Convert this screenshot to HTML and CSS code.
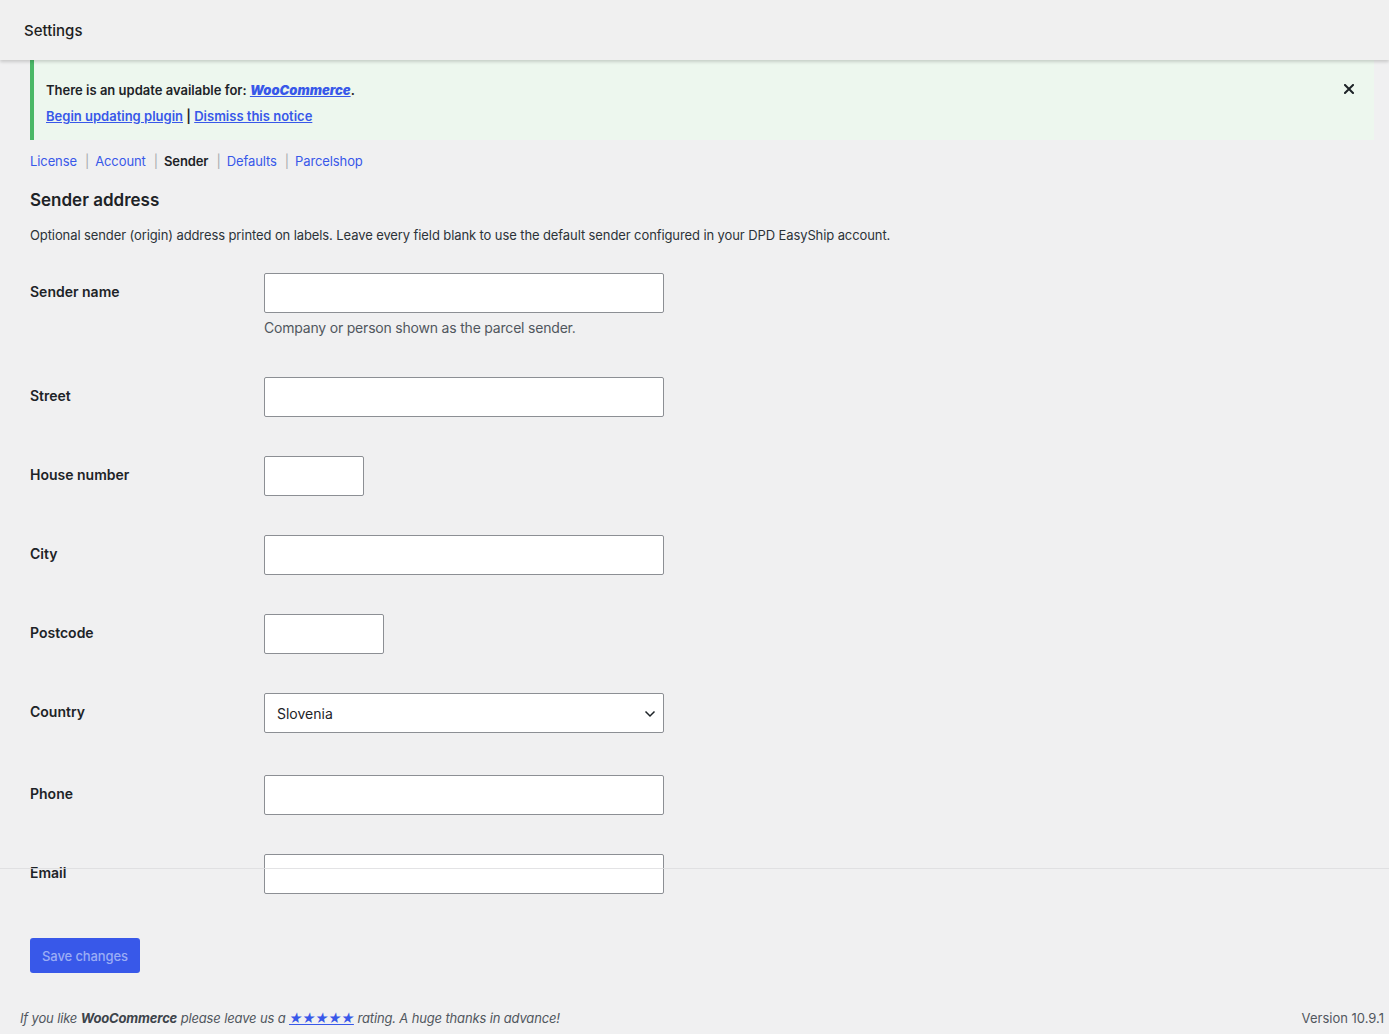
FILE: index.html
```html
<!DOCTYPE html>
<html lang="en">
  <head>
    <meta charset="UTF-8" />
    <meta name="viewport" content="width=device-width, initial-scale=1.0" />
    <title>Settings</title>
    <link rel="stylesheet" href="styles.css">
  </head>
  <body>
    <header class="topbar">
      <h1>Settings</h1>
    </header>

    <div class="wrap">
      <div class="notice">
        <p class="notice-title">
          There is an update available for:
          <a href="#"><strong><em>WooCommerce</em></strong></a>.
        </p>
        <p class="notice-links">
          <a href="#">Begin updating plugin</a> | <a href="#">Dismiss this notice</a>
        </p>
        <button class="notice-dismiss" type="button" aria-label="Dismiss">
          <svg width="10" height="10" viewBox="0 0 10 10">
            <path d="M1 1 L9 9 M9 1 L1 9" stroke="#1d2327" stroke-width="2" stroke-linecap="square" />
          </svg>
        </button>
      </div>

      <ul class="subnav">
        <li><a href="#">License</a><span class="sep">|</span></li>
        <li><a href="#">Account</a><span class="sep">|</span></li>
        <li><span class="current">Sender</span><span class="sep">|</span></li>
        <li><a href="#">Defaults</a><span class="sep">|</span></li>
        <li><a href="#">Parcelshop</a></li>
      </ul>

      <h2 class="section-title">Sender address</h2>
      <p class="section-desc">
        Optional sender (origin) address printed on labels. Leave every field blank to use the default sender configured in your DPD EasyShip account.
      </p>

      <form class="settings-form">
        <div class="form-row">
          <label for="sender_name">Sender name</label>
          <div class="field">
            <input id="sender_name" type="text" class="input-wide" />
            <p class="field-desc">Company or person shown as the parcel sender.</p>
          </div>
        </div>

        <div class="form-row">
          <label for="street">Street</label>
          <div class="field">
            <input id="street" type="text" class="input-wide" />
          </div>
        </div>

        <div class="form-row">
          <label for="house">House number</label>
          <div class="field">
            <input id="house" type="text" class="input-tiny" />
          </div>
        </div>

        <div class="form-row">
          <label for="city">City</label>
          <div class="field">
            <input id="city" type="text" class="input-wide" />
          </div>
        </div>

        <div class="form-row">
          <label for="postcode">Postcode</label>
          <div class="field">
            <input id="postcode" type="text" class="input-short" />
          </div>
        </div>

        <div class="form-row form-row-select">
          <label for="country">Country</label>
          <div class="field">
            <div class="select-wrap">
              <select id="country">
                <option>Slovenia</option>
              </select>
              <svg class="chevron" width="12" height="8" viewBox="0 0 12 8">
                <path d="M1.5 1.5 L6 6 L10.5 1.5" fill="none" stroke="#1d2327" stroke-width="1.5" />
              </svg>
            </div>
          </div>
        </div>

        <div class="form-row">
          <label for="phone">Phone</label>
          <div class="field">
            <input id="phone" type="text" class="input-wide" />
          </div>
        </div>

        <div class="form-row form-row-last">
          <label for="email">Email</label>
          <div class="field">
            <input id="email" type="text" class="input-wide" />
          </div>
        </div>

        <button class="save-button" type="button">Save changes</button>
      </form>
    </div>

    <footer class="footer">
      <p class="footer-left">
        If you like <strong>WooCommerce</strong> please leave us a <a href="#">★★★★★</a> rating. A huge thanks in advance!
      </p>
      <p class="footer-right">Version 10.9.1</p>
    </footer>

    <!-- stray divider drawn over the form -->
    <div class="overlay-line"></div>
  </body>
</html>
```

FILE: styles.css
```css
body {
  margin: 0;
  padding: 0;
  background: #f0f0f1;
  color: #1d2327;
  font-family: Inter, "Noto Sans", sans-serif;
  font-size: 13px;
  position: relative;
  min-height: 1034px;
  box-sizing: border-box;
}
a {
  color: #3858e9;
}
.topbar {
  position: relative;
  z-index: 2;
  height: 60px;
  padding: 0 24px;
  display: flex;
  align-items: center;
  background: #f0f0f0;
  box-shadow: 0 2px 3px rgba(0, 0, 0, 0.16);
}
.topbar h1 {
  margin: 0;
  font-size: 15px;
  font-weight: 500;
  color: #1e1e1e;
}
.wrap {
  padding: 0 15px 0 30px;
}
.notice {
  position: relative;
  background: #edf7ee;
  border-left: 4px solid #4ab866;
  padding: 20px 12px 14px;
}
.notice p {
  margin: 0;
  line-height: 20px;
}
.notice-title {
  font-weight: 600;
}
.notice-links {
  margin-top: 6px !important;
  font-weight: 600;
}
.notice-dismiss {
  position: absolute;
  top: 24px;
  right: 20px;
  padding: 0;
  border: none;
  background: none;
  line-height: 0;
  cursor: pointer;
}
.subnav {
  list-style: none;
  margin: 11px 0 0;
  padding: 0;
  display: flex;
  line-height: 20px;
  letter-spacing: -0.1px;
}
.subnav a {
  text-decoration: none;
}
.subnav .current {
  color: #1d2327;
  font-weight: 600;
}
.subnav .sep {
  color: #a7aaad;
  margin: 0 6px 0 8px;
}
.section-title {
  margin: 18px 0 0;
  font-size: 17px;
  line-height: 22px;
  font-weight: 600;
}
.section-desc {
  margin: 14px 0 0;
  line-height: 20px;
  color: #2c3338;
  letter-spacing: -0.1px;
}
.settings-form {
  margin-top: 28px;
}
.form-row {
  display: grid;
  grid-template-columns: 234px 1fr;
  margin-bottom: 39px;
}
.form-row-select {
  margin-bottom: 42px;
}
.form-row-last {
  margin-bottom: 44px;
}
.form-row label {
  box-sizing: border-box;
  height: 40px;
  padding-bottom: 3px;
  display: flex;
  align-items: center;
  font-size: 14px;
  font-weight: 600;
  color: #1d2327;
}
.field input,
.field select {
  box-sizing: border-box;
  height: 40px;
  margin: 0;
  border: 1px solid #8c8f94;
  border-radius: 2px;
  background: #fff;
  font-family: inherit;
  font-size: 14px;
  display: block;
}
.input-wide {
  width: 400px;
}
.input-tiny {
  width: 100px;
}
.input-short {
  width: 120px;
}
.field-desc {
  margin: 5px 0 0;
  font-size: 14px;
  line-height: 20px;
  color: #50575e;
  letter-spacing: -0.2px;
}
.select-wrap {
  position: relative;
  width: 400px;
}
.select-wrap select {
  width: 400px;
  padding: 0 12px;
  appearance: none;
  color: #1d2327;
}
.chevron {
  position: absolute;
  top: 17px;
  right: 8px;
}
.save-button {
  height: 35px;
  padding: 0 12px;
  border: none;
  border-radius: 3px;
  background: #3858e9;
  color: #9badf5;
  font-family: inherit;
  font-size: 13px;
  font-weight: 500;
  letter-spacing: -0.1px;
  cursor: pointer;
}
.footer {
  display: flex;
  justify-content: space-between;
  padding: 35px 5px 0 20px;
  line-height: 20px;
  color: #50575e;
}
.footer p {
  margin: 0;
}
.footer-left {
  font-style: italic;
  letter-spacing: -0.15px;
}
.footer-left a {
  letter-spacing: -0.6px;
}
.footer-left strong {
  color: #3c434a;
}
.overlay-line {
  position: absolute;
  top: 868px;
  left: 0;
  right: 0;
  height: 1px;
  background: #dcdcde;
  opacity: 0.8;
}
```
